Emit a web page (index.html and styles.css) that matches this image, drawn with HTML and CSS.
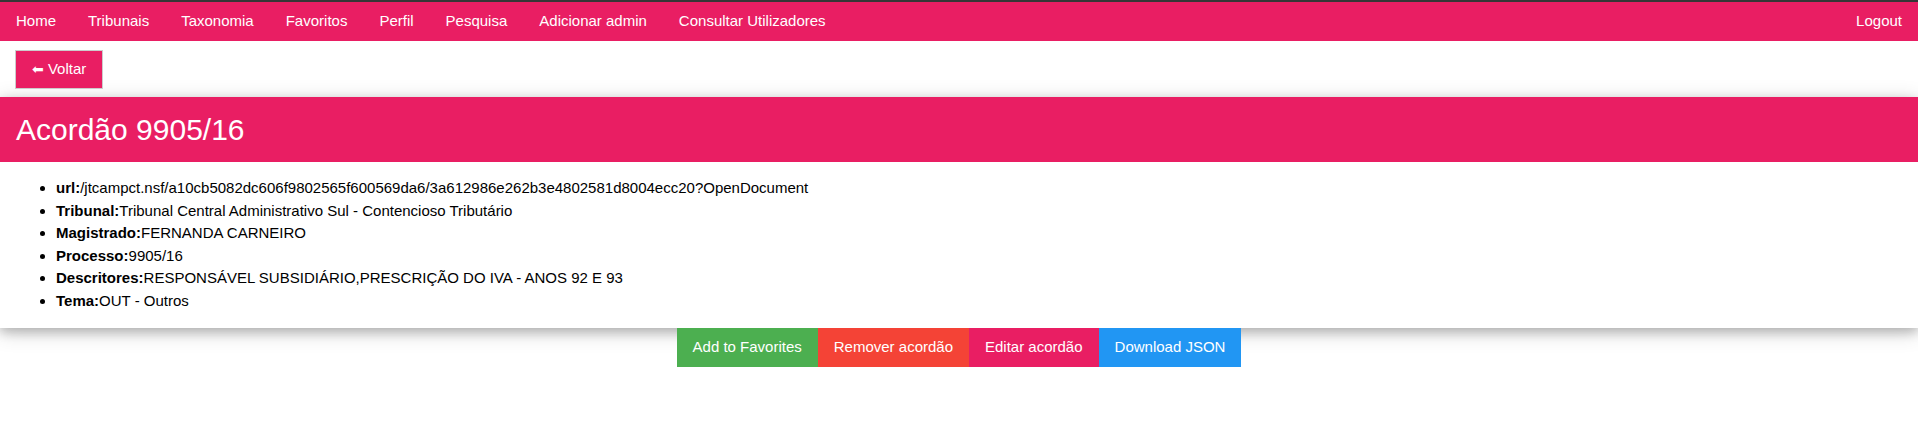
FILE: index.html
```html
<!DOCTYPE html>
<html lang="pt">
<head>
<meta charset="utf-8">
<title>Acordão 9905/16</title>
<link rel="stylesheet" href="styles.css">
</head>
<body>
<nav class="topbar">
  <div class="nav-left">
    <a class="nav-item" href="#">Home</a>
    <a class="nav-item" href="#">Tribunais</a>
    <a class="nav-item" href="#">Taxonomia</a>
    <a class="nav-item" href="#">Favoritos</a>
    <a class="nav-item" href="#">Perfil</a>
    <a class="nav-item" href="#">Pesquisa</a>
    <a class="nav-item" href="#">Adicionar admin</a>
    <a class="nav-item" href="#">Consultar Utilizadores</a>
  </div>
  <a class="nav-item" href="#">Logout</a>
</nav>

<div class="back-row">
  <a class="btn btn-back" href="#"><span class="arrow">⬅</span> Voltar</a>
</div>

<section class="card">
  <header class="card-header">
    <h2>Acordão 9905/16</h2>
  </header>
  <div class="card-body">
    <ul class="details">
      <li><b>url:</b>/jtcampct.nsf/a10cb5082dc606f9802565f600569da6/3a612986e262b3e4802581d8004ecc20?OpenDocument</li>
      <li><b>Tribunal:</b>Tribunal Central Administrativo Sul - Contencioso Tributário</li>
      <li><b>Magistrado:</b>FERNANDA CARNEIRO</li>
      <li><b>Processo:</b>9905/16</li>
      <li><b>Descritores:</b>RESPONSÁVEL SUBSIDIÁRIO,PRESCRIÇÃO DO IVA - ANOS 92 E 93</li>
      <li><b>Tema:</b>OUT - Outros</li>
    </ul>
  </div>
</section>

<div class="actions">
  <a class="btn btn-green" href="#">Add to Favorites</a>
  <a class="btn btn-red" href="#">Remover acordão</a>
  <a class="btn btn-pink" href="#">Editar acordão</a>
  <a class="btn btn-blue" href="#">Download JSON</a>
</div>
</body>
</html>
```

FILE: styles.css
```css
html, body {
  margin: 0;
  padding: 0;
}

body {
  font-family: "Liberation Sans", Arial, sans-serif;
  font-size: 15px;
  line-height: 1.5;
  color: #000;
  background: #fff;
}

a {
  text-decoration: none;
  color: inherit;
}

.topbar {
  display: flex;
  justify-content: space-between;
  background: #e91e63;
  color: #fff;
  border-top: 2px solid #363636;
}

.nav-left {
  display: flex;
}

.nav-item {
  display: block;
  padding: 8px 16px;
  color: #fff;
  white-space: nowrap;
}

.back-row {
  padding: 9px 15px 8px;
}

.btn {
  display: inline-block;
  padding: 8px 16px;
  color: #fff;
  white-space: nowrap;
}

.btn-back {
  background: #e91e63;
  border: 1px solid #ccc;
  padding: 7px 16px 8px;
}

.arrow {
  font-family: "DejaVu Sans", sans-serif;
  font-size: 14px;
}

.card {
  background: #fff;
  box-shadow: 0 4px 10px 0 rgba(0, 0, 0, 0.2), 0 4px 20px 0 rgba(0, 0, 0, 0.19);
}

.card-header {
  background: #e91e63;
  color: #fff;
  padding: 0 16px;
}

.card-header h2 {
  margin: 0;
  padding: 10px 0;
  font-size: 30px;
  font-weight: normal;
  line-height: 1.5;
}

.card-body {
  padding: 0 16px;
}

.details {
  margin: 0;
  padding: 15px 0 16px 40px;
}

.actions {
  display: flex;
  justify-content: center;
}

.btn-green { background: #4caf50; }
.btn-red { background: #f44336; }
.btn-pink { background: #e91e63; }
.btn-blue { background: #2196f3; }
```
